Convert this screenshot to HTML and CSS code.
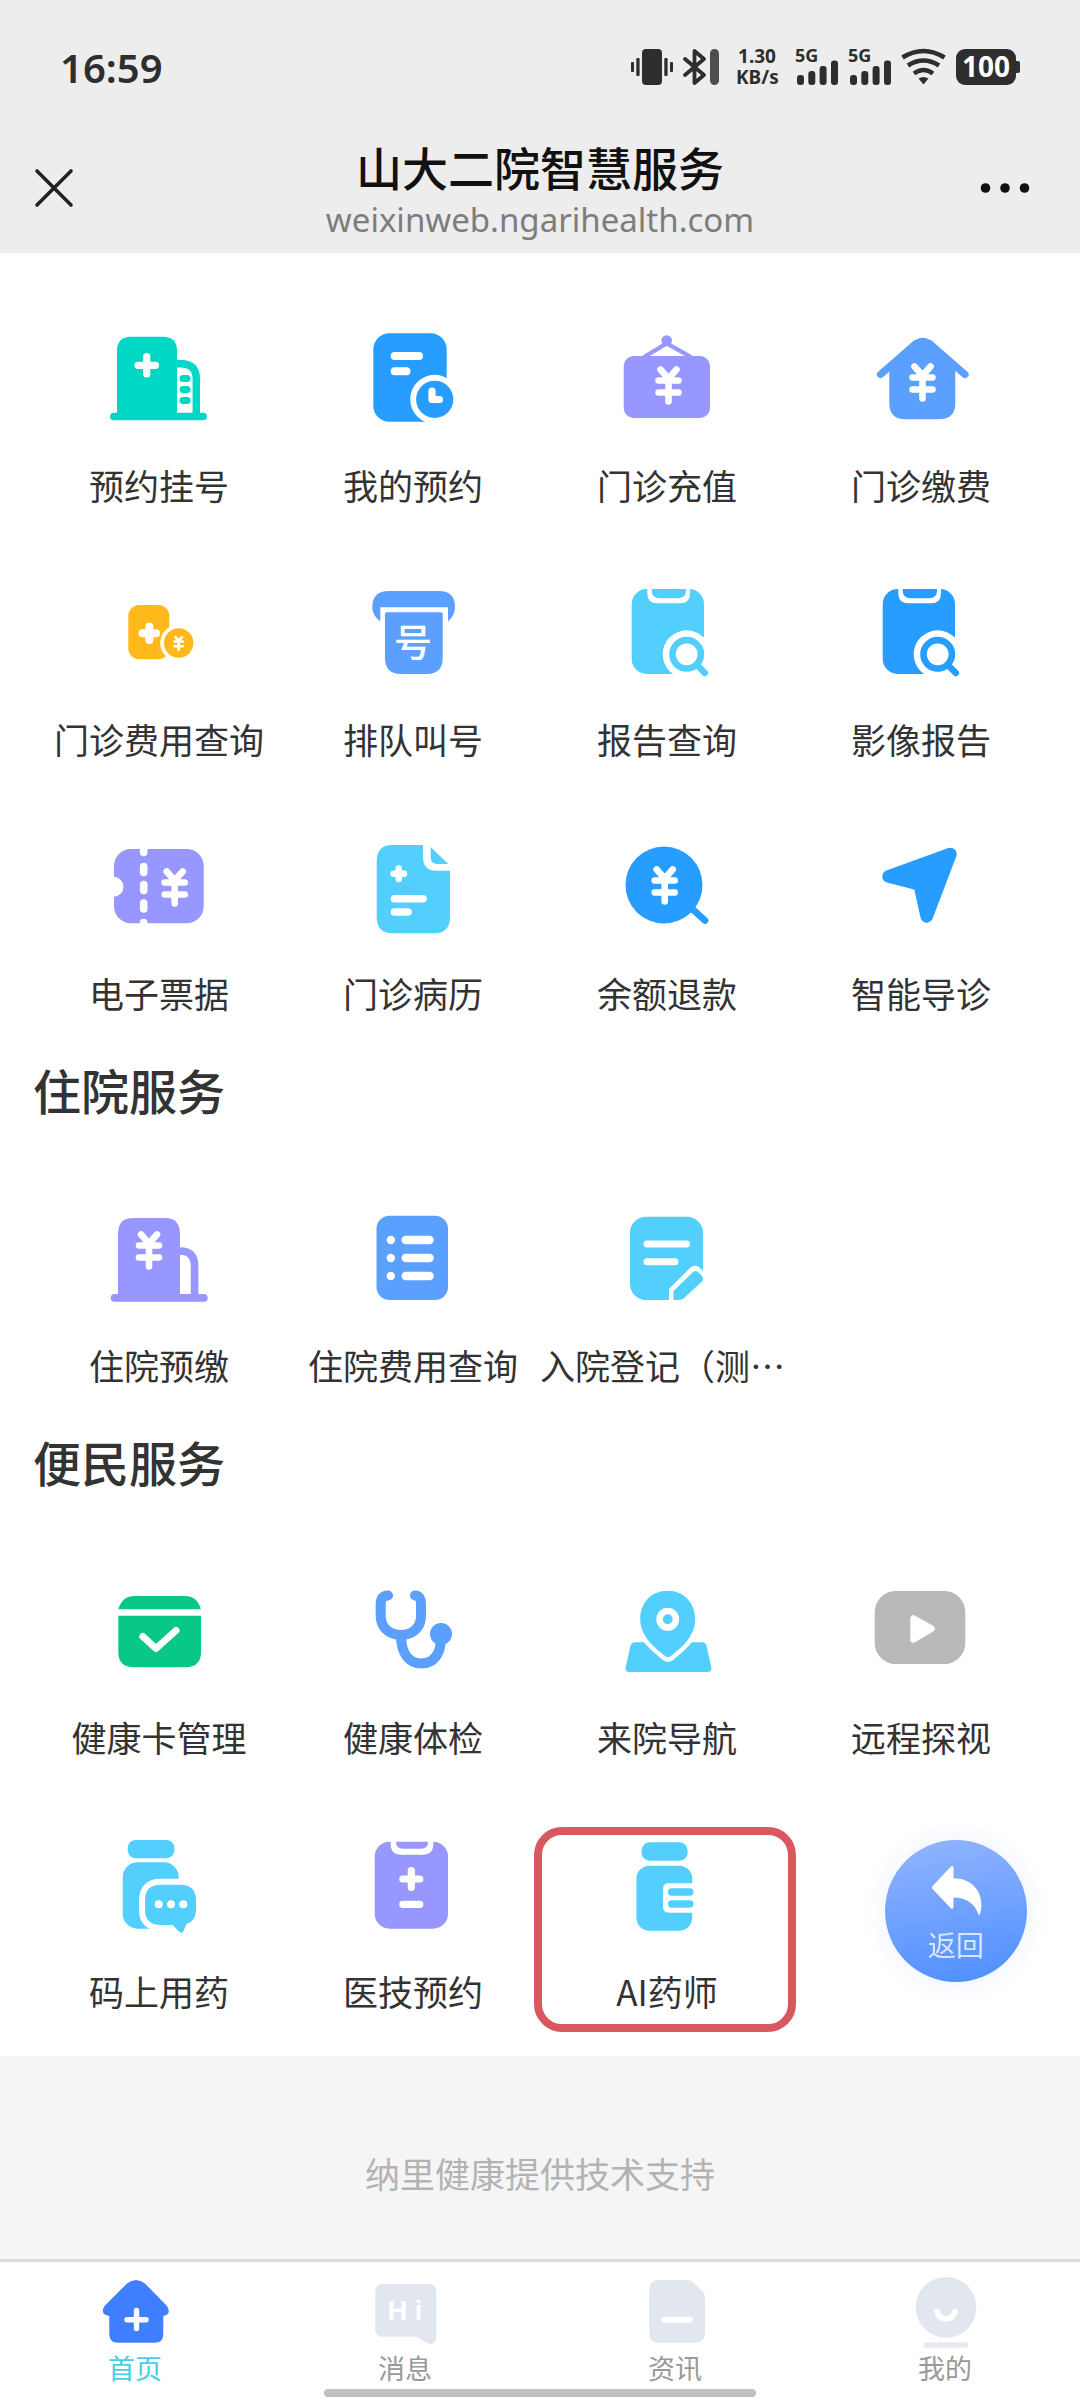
FILE: index.html
```html
<!DOCTYPE html>
<html lang="zh-CN">
<head>
<meta charset="utf-8">
<meta name="viewport" content="width=device-width">
<title>山大二院智慧服务</title>
<link rel="stylesheet" href="styles.css">
</head>
<body>
<svg class="defs" aria-hidden="true">
  <defs>
    <path id="yen" d="M-8-16 0-7 8-16M-10-5H10M-10 7H10M0-7V16" fill="none" stroke="#fff" stroke-width="6.6" stroke-linecap="round" stroke-linejoin="round"/>
    <g id="report">
      <rect x="24.7" y="17" width="72.3" height="85" rx="15" fill="currentColor"/>
      <path d="M40.3 15H83V21Q83 31.3 73 31.3H50.3Q40.3 31.3 40.3 21Z" fill="#fff"/>
      <path d="M44.7 17H79V18.500Q79 26.300 71 26.300H52.700Q44.700 26.300 44.700 18.500Z" fill="currentColor"/>
      <circle cx="79.700" cy="82.300" r="24" fill="#fff"/>
      <circle cx="79.700" cy="82.300" r="14.200" fill="none" stroke="currentColor" stroke-width="6.600"/>
      <path d="M90 93 97.800 101" stroke="currentColor" stroke-width="6.600" stroke-linecap="round"/>
    </g>
  </defs>
</svg>

<header class="header">
  <div class="status">
    <time class="clock">16:59</time>
    <div class="indicators">
      <svg width="42" height="36" viewBox="0 0 42 36" fill="#2e2e2e"><rect x="11" width="20" height="36" rx="4"/><rect x="0" y="13" width="3" height="10" rx="1"/><rect x="5.300" y="9" width="3.300" height="18" rx="1"/><rect x="33.300" y="9" width="3.300" height="18" rx="1"/><rect x="39" y="13" width="3" height="10" rx="1"/></svg>
      <svg width="36" height="36" viewBox="0 0 36 36"><path d="M2 10 21 26 11.500 34V2L21 10 2 26" fill="none" stroke="#2e2e2e" stroke-width="3.800" stroke-linecap="round" stroke-linejoin="round"/><rect x="27" width="9" height="36" rx="4.500" fill="#4d4d4d"/></svg>
      <div class="speed">1.30<br>KB/s</div>
      <svg width="43" height="36" viewBox="0 0 43 36" fill="#2e2e2e"><text class="net" x="0" y="13">5G</text><rect x="2" y="26" width="7" height="10" rx="3"/><rect x="13.300" y="22" width="7" height="14" rx="3"/><rect x="24.600" y="17" width="7" height="19" rx="3"/><rect x="36" y="11.500" width="7" height="24.500" rx="3"/></svg>
      <svg width="43" height="36" viewBox="0 0 43 36" fill="#2e2e2e"><text class="net" x="0" y="13">5G</text><rect x="2" y="26" width="7" height="10" rx="3"/><rect x="13.300" y="22" width="7" height="14" rx="3"/><rect x="24.600" y="17" width="7" height="19" rx="3"/><rect x="36" y="11.500" width="7" height="24.500" rx="3"/></svg>
      <svg width="45" height="36" viewBox="0 0 45 36" fill="none" stroke="#2e2e2e" stroke-width="4.600"><path d="M1.500 8.500Q22.500-4.500 43.500 8.500M7 16.500Q22.500 6.500 38 16.500M13 24.500Q22.500 17.500 32 24.500"/><path d="M17.500 29.500Q22.500 26.500 27.500 29.500L22.500 35.500Z" fill="#2e2e2e" stroke="none"/></svg>
      <svg width="64" height="36" viewBox="0 0 64 36"><rect width="60" height="36" rx="9" fill="#2e2e2e"/><path d="M60 12h2q2 0 2 2v8q0 2-2 2h-2z" fill="#2e2e2e"/><text class="battery" x="30" y="28" text-anchor="middle">100</text></svg>
    </div>
  </div>
  <div class="nav">
    <button class="nav-button" type="button" aria-label="关闭"><svg width="40" height="40" viewBox="0 0 40 40"><path d="M3 3 37 37M37 3 3 37" stroke="#222" stroke-width="3.600" stroke-linecap="round"/></svg></button>
    <div class="heading">
      <h1 class="title">山大二院智慧服务</h1>
      <p class="url">weixinweb.ngarihealth.com</p>
    </div>
    <button class="nav-button" type="button" aria-label="更多"><svg width="50" height="12" viewBox="0 0 50 12" fill="#111"><circle cx="5.500" cy="6" r="4.800"/><circle cx="25" cy="6" r="4.800"/><circle cx="44.500" cy="6" r="4.800"/></svg></button>
  </div>
</header>

<main class="services">
  <section class="grid" aria-label="门诊服务">
    <a class="cell" href="#"><svg class="icon" viewBox="0 0 120 120" fill="#00d7c5"><path d="M18 97V33Q18 18.700 32 18.700H64Q78 18.700 78 33V97Z"/><path d="M76 45.700H82Q97.300 45.700 97.300 61V97" fill="none" stroke="#00d7c5" stroke-width="7.400"/><rect x="11" y="94.700" width="97" height="7.600" rx="3.800"/><path d="M47.700 38.500V56M39 47.300H56.500" stroke="#fff" stroke-width="7.200" stroke-linecap="round"/><rect x="80.500" y="57" width="11" height="7" rx="3.500"/><rect x="80.500" y="68" width="11" height="7" rx="3.500"/><rect x="80.500" y="79" width="11" height="7" rx="3.500"/></svg><span class="label">预约挂号</span></a>
    <a class="cell" href="#"><svg class="icon" viewBox="0 0 120 120"><rect x="20.300" y="15.300" width="73.400" height="88.400" rx="16" fill="#279dff"/><path d="M41.700 38H66M41.700 53.300H53.500" stroke="#fff" stroke-width="8" stroke-linecap="round"/><circle cx="81.700" cy="81.300" r="24.500" fill="#fff"/><circle cx="81.700" cy="81.300" r="18.600" fill="#279dff"/><path d="M79 73V81.500H86.500" fill="none" stroke="#fff" stroke-width="7.200" stroke-linecap="round" stroke-linejoin="round"/></svg><span class="label">我的预约</span></a>
    <a class="cell" href="#"><svg class="icon" viewBox="0 0 120 120" fill="#9896ff"><rect x="16.700" y="38" width="86.300" height="62" rx="10"/><path d="M37 39 59.700 25.500 84 39" fill="none" stroke="#9896ff" stroke-width="4.200"/><circle cx="59.700" cy="22.500" r="5.300"/><use href="#yen" x="61.500" y="67.500"/></svg><span class="label">门诊充值</span></a>
    <a class="cell" href="#"><svg class="icon" viewBox="0 0 120 120" fill="#5b9fff"><path d="M28.300 48 52 24Q61.700 15.500 71.500 24L94.300 48V85Q94.300 101.300 78 101.300H44.500Q28.300 101.300 28.300 85Z"/><path d="M19.500 56.500 55 25.500M104 56.500 68.500 25.500" stroke="#5b9fff" stroke-width="7.200" stroke-linecap="round"/><use href="#yen" x="61.500" y="64.500"/></svg><span class="label">门诊缴费</span></a>

    <a class="cell" href="#"><svg class="icon" viewBox="0 0 120 120" fill="#ffb91d"><rect x="29.300" y="33" width="41" height="54.300" rx="11"/><path d="M50.300 54.500V68M43.500 61.300H57" stroke="#fff" stroke-width="8" stroke-linecap="round"/><circle cx="79.700" cy="71" r="18.500" fill="#fff"/><circle cx="79.700" cy="71" r="14.700"/><use href="#yen" transform="translate(79.700 71.500) scale(.4)"/></svg><span class="label">门诊费用查询</span></a>
    <a class="cell" href="#"><svg class="icon" viewBox="0 0 120 120" fill="#5b9fff"><path d="M36 19H86Q102 19 102 35 102 43.500 95 49.500V35.300H27.300V49.500Q19.300 43.500 19.300 35 19.300 19 36 19Z"/><path d="M32 42Q32 40.300 34 40.300H88Q89.700 40.300 89.700 42V86Q89.700 102 73.500 102H48Q32 102 32 86Z"/><text class="ticket-text" x="60" y="84" text-anchor="middle">号</text></svg><span class="label">排队叫号</span></a>
    <a class="cell" href="#"><svg class="icon cyan" viewBox="0 0 120 120"><use href="#report"/></svg><span class="label">报告查询</span></a>
    <a class="cell" href="#"><svg class="icon blue" viewBox="0 0 120 120"><use href="#report" x="-3"/></svg><span class="label">影像报告</span></a>

    <a class="cell" href="#"><svg class="icon" viewBox="0 0 120 120"><rect x="15" y="23" width="89.700" height="74.300" rx="17" fill="#9896ff"/><circle cx="14.500" cy="60.700" r="10" fill="#fff"/><path d="M44.700 20V26.500M44.700 40.500V46.500M44.700 58.500V64.500M44.700 77V83M44.700 96.500V100" stroke="#fff" stroke-width="7.600" stroke-linecap="round"/><use href="#yen" x="75.700" y="61.500"/></svg><span class="label">电子票据</span></a>
    <a class="cell" href="#"><svg class="icon" viewBox="0 0 120 120"><path d="M39.700 19H70V31Q70 44.700 83 44.700H97V91Q97 107.300 81 107.300H39.700Q23.700 107.300 23.700 91V35Q23.700 19 39.700 19Z" fill="#52cffd"/><path d="M77.700 21 95.300 38H84Q77.700 38 77.700 31Z" fill="#52cffd"/><path d="M45.700 42.500V53M40.500 47.700H51" stroke="#fff" stroke-width="6.400" stroke-linecap="round"/><path d="M41.500 72.700H70M41.500 86H55" stroke="#fff" stroke-width="7.600" stroke-linecap="round"/></svg><span class="label">门诊病历</span></a>
    <a class="cell" href="#"><svg class="icon" viewBox="0 0 120 120"><circle cx="57" cy="59" r="38.500" fill="#279dff"/><path d="M82 80 98 94.500" stroke="#279dff" stroke-width="6.800" stroke-linecap="round"/><use href="#yen" x="57.700" y="59.500"/></svg><span class="label">余额退款</span></a>
    <a class="cell" href="#"><svg class="icon" viewBox="0 0 120 120"><path d="M89.500 28 27.500 50.500 58.500 58.500 65.700 90.500Z" fill="#279dff" stroke="#279dff" stroke-width="12.500" stroke-linejoin="round"/></svg><span class="label">智能导诊</span></a>
  </section>

  <h2 class="section-title">住院服务</h2>
  <section class="grid" aria-label="住院服务">
    <a class="cell" href="#"><svg class="icon" viewBox="0 0 120 120" fill="#9896ff"><path d="M19 98V36Q19 20 34 20H66Q81 20 81 36V98Z"/><path d="M79 53H81Q95.600 53 95.600 68V98" fill="none" stroke="#9896ff" stroke-width="7.600"/><rect x="11.700" y="96" width="97" height="7.700" rx="3.800"/><use href="#yen" x="50" y="52.500"/></svg><span class="label">住院预缴</span></a>
    <a class="cell" href="#"><svg class="icon" viewBox="0 0 120 120"><rect x="23.500" y="17.700" width="71.500" height="84.300" rx="13" fill="#5b9fff"/><g fill="#fff"><circle cx="37.800" cy="42" r="4.200"/><circle cx="37.800" cy="60" r="4.200"/><circle cx="37.800" cy="78" r="4.200"/><rect x="48.500" y="37.800" width="32.300" height="8.400" rx="4.200"/><rect x="48.500" y="55.800" width="32.300" height="8.400" rx="4.200"/><rect x="48.500" y="73.800" width="32.300" height="8.400" rx="4.200"/></g></svg><span class="label">住院费用查询</span></a>
    <a class="cell" href="#"><svg class="icon" viewBox="0 0 120 120"><rect x="23" y="18.700" width="73" height="83.300" rx="16" fill="#52cffd"/><path d="M40 46H79.500M40 63.700H68" stroke="#fff" stroke-width="7" stroke-linecap="round"/><path d="M62 108V91L84 69Q88 66 92 69L100 77 98 108Z" fill="#fff"/><path d="M66.500 102V93L86 74Q88.500 72 91 74L95 78Q97 81 95 83.500L76 101 73 102Z" fill="#52cffd"/></svg><span class="label label-full">入院登记（测…</span></a>
  </section>

  <h2 class="section-title">便民服务</h2>
  <section class="grid" aria-label="便民服务">
    <a class="cell" href="#"><svg class="icon" viewBox="0 0 120 120" fill="#09c886"><path d="M19.300 39.300Q23 26 36 26H86Q98 26 102 39.300Z"/><path d="M19.300 45.700H102V82Q102 97.300 86 97.300H35Q19.300 97.300 19.300 82Z"/><path d="M43.800 66.500 57 78.500 77 60.500" fill="none" stroke="#fff" stroke-width="7" stroke-linecap="round" stroke-linejoin="round"/></svg><span class="label">健康卡管理</span></a>
    <a class="cell" href="#"><svg class="icon" viewBox="0 0 120 120"><g fill="none" stroke="#5b9fff" stroke-width="10" stroke-linecap="round"><path d="M35 25.500Q27.700 25.500 27.700 34V46C27.700 57 36 65 48 65S68 57 68 46V34Q68 25.500 62 25.500"/><path d="M48 66C48 83 56 93.500 68.500 93.500S87.700 83 87.700 70"/></g><circle cx="88" cy="64" r="11" fill="#5b9fff"/></svg><span class="label">健康体检</span></a>
    <a class="cell" href="#"><svg class="icon" viewBox="0 0 120 120"><path d="M28 72.300H95Q98.500 72.300 99.500 76L104.300 97Q105 102 100 102H22.500Q17.700 102 18.700 97L23.500 76Q24.500 72.300 28 72.300Z" fill="#52cffd"/><path d="M60.700 20.700C44 20.700 33.200 33 33.200 49 33.200 68 50 79 58 86Q61 88.500 64 86C72 79 88.200 68 88.200 49 88.200 33 77 20.700 60.700 20.700Z" fill="#52cffd" stroke="#fff" stroke-width="9" paint-order="stroke"/><circle cx="60.700" cy="49.300" r="8.200" fill="none" stroke="#fff" stroke-width="6.500"/></svg><span class="label">来院导航</span></a>
    <a class="cell" href="#"><svg class="icon" viewBox="0 0 120 120"><rect x="13.700" y="21" width="90.600" height="73" rx="21" fill="#b9b9b9"/><path d="M52.500 48.500V69.500L70.500 58.700Z" fill="#fff" stroke="#fff" stroke-width="6.500" stroke-linejoin="round"/></svg><span class="label">远程探视</span></a>

    <a class="cell" href="#"><svg class="icon" viewBox="0 0 120 120" fill="#52cffd"><rect x="28.700" y="16" width="46.600" height="18.300" rx="8"/><rect x="23.700" y="38.300" width="56" height="66.400" rx="15"/><path d="M62 60.700H81Q97 60.700 97 76V86Q97 97 87.500 100L84.500 107Q83 110 80 107.500L73.700 101H62Q46 101 46 86V76Q46 60.700 62 60.700Z" stroke="#fff" stroke-width="12" paint-order="stroke"/><g fill="#fff"><circle cx="59.700" cy="80.300" r="4"/><circle cx="72" cy="80.300" r="4"/><circle cx="84.300" cy="80.300" r="4"/></g></svg><span class="label">码上用药</span></a>
    <a class="cell" href="#"><svg class="icon" viewBox="0 0 120 120"><rect x="21.700" y="17.700" width="73.300" height="87" rx="15" fill="#9896ff"/><path d="M37.700 16H80.300V20Q80.300 30.700 70 30.700H48Q37.700 30.700 37.700 20Z" fill="#fff"/><path d="M43 17.700H75Q75 24.700 68 24.700H50Q43 24.700 43 17.700Z" fill="#9896ff"/><path d="M58.300 46.500V63.500M49.800 55H66.800M49.800 80.300H66.800" stroke="#fff" stroke-width="7.200" stroke-linecap="round"/></svg><span class="label">医技预约</span></a>
    <a class="cell cell-marked" href="#"><svg class="icon" viewBox="0 0 120 120" fill="#52cffd"><rect x="34.600" y="18.300" width="46" height="18.400" rx="8"/><rect x="29.400" y="41.700" width="55.800" height="65" rx="13"/><path d="M90 59.300H62Q56 59.300 56 65V83Q56 88.700 62 88.700H90Z" fill="#fff"/><rect x="61" y="64.300" width="25.500" height="7.400" rx="3.700"/><rect x="61" y="76.300" width="25.500" height="7.400" rx="3.700"/></svg><span class="label">AI药师</span></a>
  </section>
</main>

<p class="support">纳里健康提供技术支持</p>

<nav class="tabs">
  <a class="tab tab-active" href="#"><svg width="80" height="80" viewBox="0 0 80 80"><path d="M32 13.500Q41 6.500 50 13.500L72 36Q77 44.500 68.300 46V64Q68.300 72.700 59.500 72.700H23Q14.300 72.700 14.300 64V46Q4.500 44.500 9.500 36Z" fill="#3f7fff"/><path d="M41.500 40.500V58.500M32 49.700H51" stroke="#fff" stroke-width="5.400" stroke-linecap="round"/></svg><span>首页</span></a>
  <a class="tab" href="#"><svg width="80" height="80" viewBox="0 0 80 80"><path d="M18 14H64Q71.300 14 71.300 21V70Q68 76 62 73L51.700 66.700H18Q10.300 66.700 10.300 60V21Q10.300 14 18 14Z" fill="#e2e6ef"/><text class="hi" x="40" y="50" text-anchor="middle">H i</text></svg><span>消息</span></a>
  <a class="tab" href="#"><svg width="80" height="80" viewBox="0 0 80 80"><path d="M23.500 10H53Q56 10 58 12L68 22Q70 24 70 27V63Q70 72.700 60 72.700H23.500Q14.300 72.700 14.300 63V20Q14.300 10 23.500 10Z" fill="#e2e6ef"/><path d="M29.500 49.700H55" stroke="#fff" stroke-width="6" stroke-linecap="round"/></svg><span>资讯</span></a>
  <a class="tab" href="#"><svg width="80" height="80" viewBox="0 0 80 80"><circle cx="41" cy="37.300" r="30.400" fill="#e2e6ef"/><path d="M32 41.500Q34 49 41 49T50 41.500" fill="none" stroke="#fff" stroke-width="5.600" stroke-linecap="round"/><path d="M21.500 75H60.500" stroke="#e6e9f0" stroke-width="5.600" stroke-linecap="round"/></svg><span>我的</span></a>
</nav>

<button class="back" type="button"><svg width="142" height="86" viewBox="0 0 142 86"><path d="M48 45.500 66 26.500Q68.500 25 68.500 28.500V38.300C84 38 97 49 96.400 66Q96 73 94 75.500C90 64 82 57.500 68.500 57.500V66.500Q68 70.500 65.500 68L48 49.500Q46 47.300 48 45.500Z" fill="#fff"/></svg><span>返回</span></button>
<div class="home-indicator"></div>
</body>
</html>
```

FILE: styles.css
```css
* {
  box-sizing: border-box;
}

body {
  margin: 0;
  min-height: 100vh;
  display: flex;
  flex-direction: column;
  background: #fff;
  color: #333;
  font-family: "Noto Sans CJK SC", "Noto Sans", sans-serif;
}

h1,
h2,
p {
  margin: 0;
  font-weight: 500;
}

a {
  color: inherit;
  text-decoration: none;
}

button {
  border: 0;
  padding: 0;
  background: none;
  font: inherit;
}

svg {
  display: block;
  flex: none;
  overflow: visible;
}

.defs {
  position: absolute;
  width: 0;
  height: 0;
  overflow: hidden;
}

/* Header */
.header {
  background: #ededed;
  padding-bottom: 11px;
}

.status {
  display: flex;
  align-items: center;
  justify-content: space-between;
  height: 134px;
  padding: 0 60px;
  font-family: "Noto Sans", sans-serif;
  color: #2e2e2e;
}

.clock {
  font-size: 40px;
  font-weight: 600;
}

.indicators {
  display: flex;
  align-items: center;
  gap: 10px;
}

.speed {
  margin: 0 7px;
  width: 42px;
  font-size: 19px;
  line-height: 21px;
  font-weight: 700;
  text-align: center;
}

.net {
  font-size: 18px;
  font-weight: 700;
}

.battery {
  font-size: 28px;
  font-weight: 700;
  fill: #fff;
}

.nav {
  display: grid;
  grid-template-columns: 108px 1fr 150px;
  align-items: center;
}

.nav-button {
  display: flex;
  align-items: center;
  justify-content: center;
  height: 88px;
}

.heading {
  padding: 4px 0 0 42px;
  text-align: center;
}

.title {
  font-size: 46px;
  line-height: 56px;
  color: #111;
}

.url {
  font-family: "Noto Sans", sans-serif;
  font-size: 33px;
  line-height: 48px;
  padding-top: 2px;
  margin-bottom: -2px;
  font-weight: 400;
  color: #7d7d7d;
}

/* Service grid */
.services {
  padding-top: 43px;
}

.grid {
  display: grid;
  grid-template-columns: repeat(4, 1fr);
  padding: 0 32px;
}

.cell {
  position: relative;
  display: flex;
  flex-direction: column;
  align-items: center;
  gap: 23px;
  padding: 22px 0 41px;
}

.icon {
  width: 120px;
  height: 120px;
}

.cyan {
  color: #52cffd;
}

.blue {
  color: #279dff;
}

.ticket-text {
  font-size: 38px;
  font-weight: 500;
  fill: #fff;
}

.label {
  font-size: 35px;
  line-height: 48px;
  white-space: nowrap;
}

.label-full {
  width: 100%;
}

.cell-marked::after {
  content: "";
  position: absolute;
  inset: 25px -2px 24px -6px;
  border: 8px solid #d9585e;
  border-radius: 28px;
}

.section-title {
  padding: 0 33px;
  margin-bottom: 56px;
  font-size: 48px;
  line-height: 62px;
}

.support {
  flex: 1;
  padding: 93px 0 62px;
  background: #f5f5f5;
  color: #b3b3b3;
  font-size: 35px;
  line-height: 48px;
  font-weight: 400;
  text-align: center;
}

/* Bottom tabs */
.tabs {
  display: grid;
  grid-template-columns: repeat(4, 1fr);
  padding: 8px 0 14px;
  border-top: 3px solid #dadada;
}

.tab {
  display: flex;
  flex-direction: column;
  align-items: center;
  font-size: 27px;
  line-height: 36px;
  color: #999;
}

.tab-active {
  color: #45cfe3;
}

.hi {
  font-family: "Liberation Sans", sans-serif;
  font-size: 27px;
  font-weight: 700;
  fill: #fff;
}

/* Floating controls */
.back {
  position: fixed;
  right: 53px;
  bottom: 418px;
  width: 142px;
  height: 142px;
  border-radius: 50%;
  background: linear-gradient(170deg, #92b5ff, #4e8eff);
  box-shadow: 0 0 24px rgba(80, 130, 230, 0.12);
  color: #d6e8ff;
  font-size: 28px;
  line-height: 36px;
  display: flex;
  flex-direction: column;
  align-items: center;
}

.home-indicator {
  position: fixed;
  left: 30%;
  right: 30%;
  bottom: 3px;
  height: 8px;
  border-radius: 4px;
  background: #c1c1c1;
}
```
